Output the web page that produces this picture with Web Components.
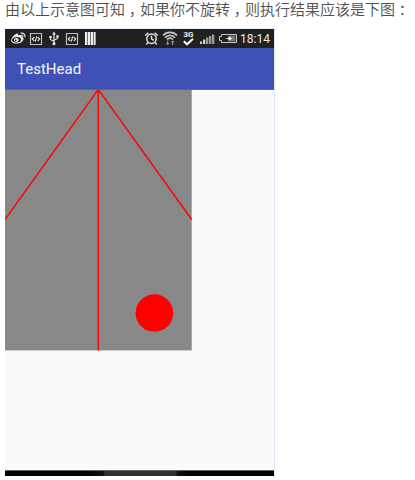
<!DOCTYPE html>
<html lang="zh-CN"><head><meta charset="utf-8"><title>TestHead</title>
<style>html,body{margin:0;background:#fff}body{width:415px;height:480px;overflow:hidden}</style></head>
<body><article-page></article-page>
<script>
const define=(name,html)=>customElements.define(name,class extends HTMLElement{
  constructor(){super();this.attachShadow({mode:'open'}).innerHTML=html;}
});
define('article-caption',`<style>
:host{display:block;height:28px;box-sizing:border-box;padding-left:5px;font:350 15px/19px "Liberation Sans","Noto Sans CJK SC",sans-serif;color:#505050;white-space:nowrap}
</style><slot></slot>`);
define('center-mark',`<style>:host{display:inline-block;width:15px;text-align:center;white-space:nowrap;font-feature-settings:"halt"}</style><slot></slot>`);
define('status-bar',`<style>
:host{display:flex;height:19px;background:#212121;color:#e6e6e6}
svg{display:block;width:269px;height:19px}
text{font-family:Roboto,sans-serif}
</style>
<svg viewBox="5 29 269 19" fill="none" stroke="#e2e2e2" stroke-width="1">
<g>
<path fill="#e8e8e8" stroke="none" fill-rule="evenodd" d="M16 34c1.500-.9 2.600-.2 2 1.500 2.200-.8 4-.6 3.500 1.300 2.200.5 2.600 2.300 1.400 3.900-2.200 3.300-9 3.900-11.100 1.300C9.800 39.600 13.500 35.200 16 34zm1 3.100c-3 0-5 1.400-5 3s2 2.700 4.600 2.500c2.700-.2 4.600-1.500 4.400-3.200-.1-1.500-1.700-2.300-4-2.300z"/>
<ellipse cx="16.300" cy="40" rx="2.400" ry="2" fill="#e8e8e8" stroke="none"/><circle cx="15.700" cy="40.400" r=".8" fill="#222" stroke="none"/>
<path stroke-width="1.200" d="M20.500 33.200c3-.7 5 1.300 4.300 4.200M20.900 35.300c1.400-.2 2.100.6 1.800 1.700"/>
</g>
<g><path stroke="#bdbdbd" stroke-width="1.200" d="M30.500 33.500h11v11h-11z"/><path d="M34.300 37l-2 2 2 2M37.700 37l2 2-2 2M36.700 36.500l-1.400 5" stroke-width="1.100"/></g>
<path stroke-width="1.200" d="M54 34v9M54 41.500l-3.500-2v-2M54 40.300l3.500-1.800v-2"/><path fill="#e8e8e8" stroke="none" d="M54 31.500l1.800 3h-3.600zM49.300 36h2.400v2h-2.400zM56.300 35.200h2.400v2.200h-2.400z"/><circle cx="54" cy="43.800" r="1.500" fill="#e8e8e8" stroke="none"/>
<g transform="translate(36 0)"><path stroke="#bdbdbd" stroke-width="1.200" d="M30.500 33.500h11v11h-11z"/><path d="M34.300 37l-2 2 2 2M37.700 37l2 2-2 2M36.700 36.500l-1.400 5" stroke-width="1.100"/></g>
<path fill="#eee" stroke="none" d="M85 32h2.300v13H85zM87.900 32h2.300v13h-2.300zM90.800 32h2.200v13h-2.200zM93.600 32h2v13h-2z"/>
<g><circle cx="151.500" cy="38.700" r="4.700" stroke-width="1.500"/><path d="M151.500 35.700v3.200l2.300 1.500M145.300 35.500l3-2.700M154.700 32.800l3 2.700M148 42.500l-1.700 2M155 42.500l1.700 2" stroke-width="1.400"/></g>
<g stroke="#c4c4c4" stroke-width="1.700"><path d="M163 35.500c3.500-4.200 10.500-4.200 14 0M165 37.700c2.500-3 7.500-3 10 0M167 39.500c1.500-1.900 4.500-1.900 6 0"/></g>
<path fill="#909090" stroke="none" d="M167 40.500h1.300v2.700h1.200l-1.800 2-1.900-2h1.200zM172 45h1.300v-2.700h1.200l-1.800-2-1.900 2h1.200z"/>
<text x="183.500" y="37.300" font-size="8" font-weight="700" fill="#f1f1f1" stroke="none" textLength="10" lengthAdjust="spacingAndGlyphs">3G</text><path stroke="#fff" stroke-width="2" d="M183.800 41.300l3.200 3 6-5.500"/>
<path fill="#d0d0d0" stroke="none" d="M200 41.500h2V44h-2zM203 39.500h2.300V44H203z"/><path fill="#999" stroke="none" d="M206 37.500h2.400V44H206zM209 36h2.400v8H209zM212 34.500h2.300V44H212z"/>
<path stroke="#c5c5c5" d="M221.500 34.500h15v8h-15v-2h-2v-4h2z"/><path fill="#777" stroke="none" d="M229 35.500h6.500v6H229z"/><path fill="#fff" stroke="none" d="M225 38.300l3.500-.4v-2l3.500 2.500-3.500 2.600v-1.700z"/>
<text x="240" y="43.200" font-size="12.500" fill="#e9e9e9" stroke="none" textLength="30" lengthAdjust="spacingAndGlyphs">18:14</text>
</svg>`);
define('app-bar',`<style>:host{display:flex;align-items:center;height:42px;box-sizing:border-box;padding:1px 0 0 12px;background:#3f51b5;color:#f5f5fa;font:400 15px/20px Roboto,sans-serif;border-bottom:1px solid #5b6389}
</style><span><slot></slot></span>`);
define('drawing-view',`<style>:host{display:block;height:380px;background:#fafafa}svg{display:block}</style>
<svg width="269" height="380"><path fill="#ccc" d="M0 0h187v261H0z"/><path fill="#888" d="M0 0h186.500v260H0z"/>
<path fill="none" stroke="#fa0808" stroke-width="1.500" stroke-linejoin="bevel" d="M0 129.500L93.300-.5L186.700 129.500M93.300-.5V260.500"/>
<circle cx="149.400" cy="223" r="18.800" fill="#f00"/></svg>`);
define('nav-bar',`<style>:host{display:block;height:6px;box-sizing:border-box;border-top:1px solid #616161;background:linear-gradient(90deg,#000 0 84px,#101010 98px,#303030 100px 170px,#101010 173px,#000 185px)}</style>`);
define('phone-screen',`<style>:host{display:flex;flex-direction:column;width:269px;margin-left:5px;border-right:1px solid #dbe6f3;border-top:1px solid #e4edf7}</style>
<status-bar></status-bar><app-bar>TestHead</app-bar><drawing-view></drawing-view><nav-bar></nav-bar>`);
define('article-page',`<style>:host{display:block;width:415px;height:480px;background:#fff}</style>
<article-caption>由以上示意图可知<center-mark>，</center-mark>如果你不旋转<center-mark>，</center-mark>则执行结果应该是下图<center-mark>：</center-mark></article-caption><phone-screen></phone-screen>`);
</script></body></html>
